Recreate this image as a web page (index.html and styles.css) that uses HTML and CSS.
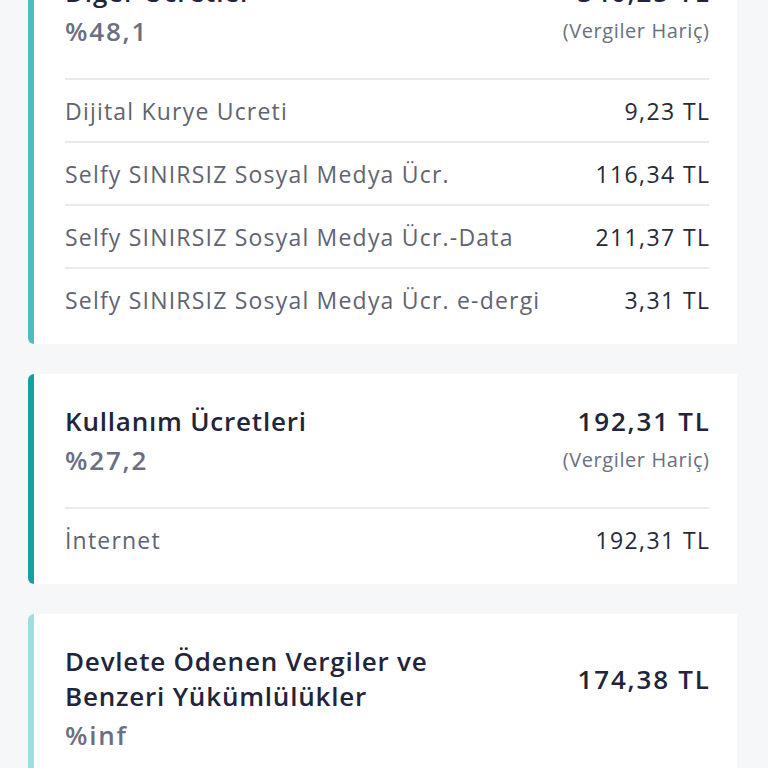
FILE: index.html
```html
<!DOCTYPE html>
<html lang="tr">
<head>
  <meta charset="UTF-8">
  <title>Fatura Detayı</title>
  <link rel="stylesheet" href="styles.css">
</head>
<body>
  <div class="list">

    <section class="card card-other">
      <div class="head">
        <div class="head-line">
          <h3 class="title">Diğer Ücretler</h3>
          <span class="total">340,25 TL</span>
        </div>
        <div class="head-line">
          <span class="percent">%48,1</span>
          <span class="note">(Vergiler Hariç)</span>
        </div>
      </div>
      <div class="row"><span class="label">Dijital Kurye Ucreti</span><span class="amount">9,23 TL</span></div>
      <div class="row"><span class="label">Selfy SINIRSIZ Sosyal Medya Ücr.</span><span class="amount">116,34 TL</span></div>
      <div class="row"><span class="label">Selfy SINIRSIZ Sosyal Medya Ücr.-Data</span><span class="amount">211,37 TL</span></div>
      <div class="row"><span class="label">Selfy SINIRSIZ Sosyal Medya Ücr. e-dergi</span><span class="amount">3,31 TL</span></div>
    </section>

    <section class="card card-usage">
      <div class="head">
        <div class="head-line">
          <h3 class="title">Kullanım Ücretleri</h3>
          <span class="total">192,31 TL</span>
        </div>
        <div class="head-line">
          <span class="percent">%27,2</span>
          <span class="note">(Vergiler Hariç)</span>
        </div>
      </div>
      <div class="row"><span class="label">İnternet</span><span class="amount">192,31 TL</span></div>
    </section>

    <section class="card card-tax">
      <div class="head">
        <div class="head-line">
          <h3 class="title">Devlete Ödenen Vergiler ve<br>Benzeri Yükümlülükler</h3>
          <span class="total">174,38 TL</span>
        </div>
        <div class="head-line">
          <span class="percent">%inf</span>
        </div>
      </div>
    </section>

  </div>
</body>
</html>
```

FILE: styles.css
```css
body {
  margin: 0;
  padding: 0;
  background: #f6f7f9;
  font-family: 'Open Sans', 'Noto Sans', sans-serif;
  color: #24273a;
  overflow: hidden;
}

.list {
  display: flex;
  flex-direction: column;
  gap: 30px;
  margin-top: -55px;
  padding: 0 31px 0 28px;
}

.card {
  background: #fff;
  border-left: 6px solid #4dbdc2;
  border-radius: 6px 0 0 6px;
  padding: 0 28px 14px 31px;
}

.card-usage {
  border-left-color: #13a0a5;
}

.card-tax {
  border-left-color: #a1dcde;
}

.head {
  padding: 30px 0 28px;
}

.head-line {
  display: flex;
  justify-content: space-between;
  align-items: center;
}

.title {
  margin: 0;
  font-size: 26px;
  line-height: 35px;
  font-weight: 600;
  letter-spacing: 0.8px;
  color: #22253a;
}

.total {
  font-size: 26px;
  line-height: 35px;
  font-weight: 600;
  letter-spacing: 1.8px;
  margin-right: -1.8px;
  color: #22253a;
}

.percent {
  margin-top: 2px;
  font-size: 26px;
  line-height: 38px;
  font-weight: 600;
  letter-spacing: 1.8px;
  color: #6b6f80;
}

.note {
  font-size: 20px;
  letter-spacing: 0.6px;
  margin-right: -0.6px;
  color: #6b6f80;
}

.row {
  display: flex;
  justify-content: space-between;
  align-items: center;
  height: 61px;
  border-top: 2px solid #e9eaed;
  font-size: 23px;
}

.label {
  letter-spacing: 1.2px;
  color: #5f6372;
}

.amount {
  letter-spacing: 1.4px;
  margin-right: -1.4px;
  color: #262938;
  font-weight: 500;
}
```
